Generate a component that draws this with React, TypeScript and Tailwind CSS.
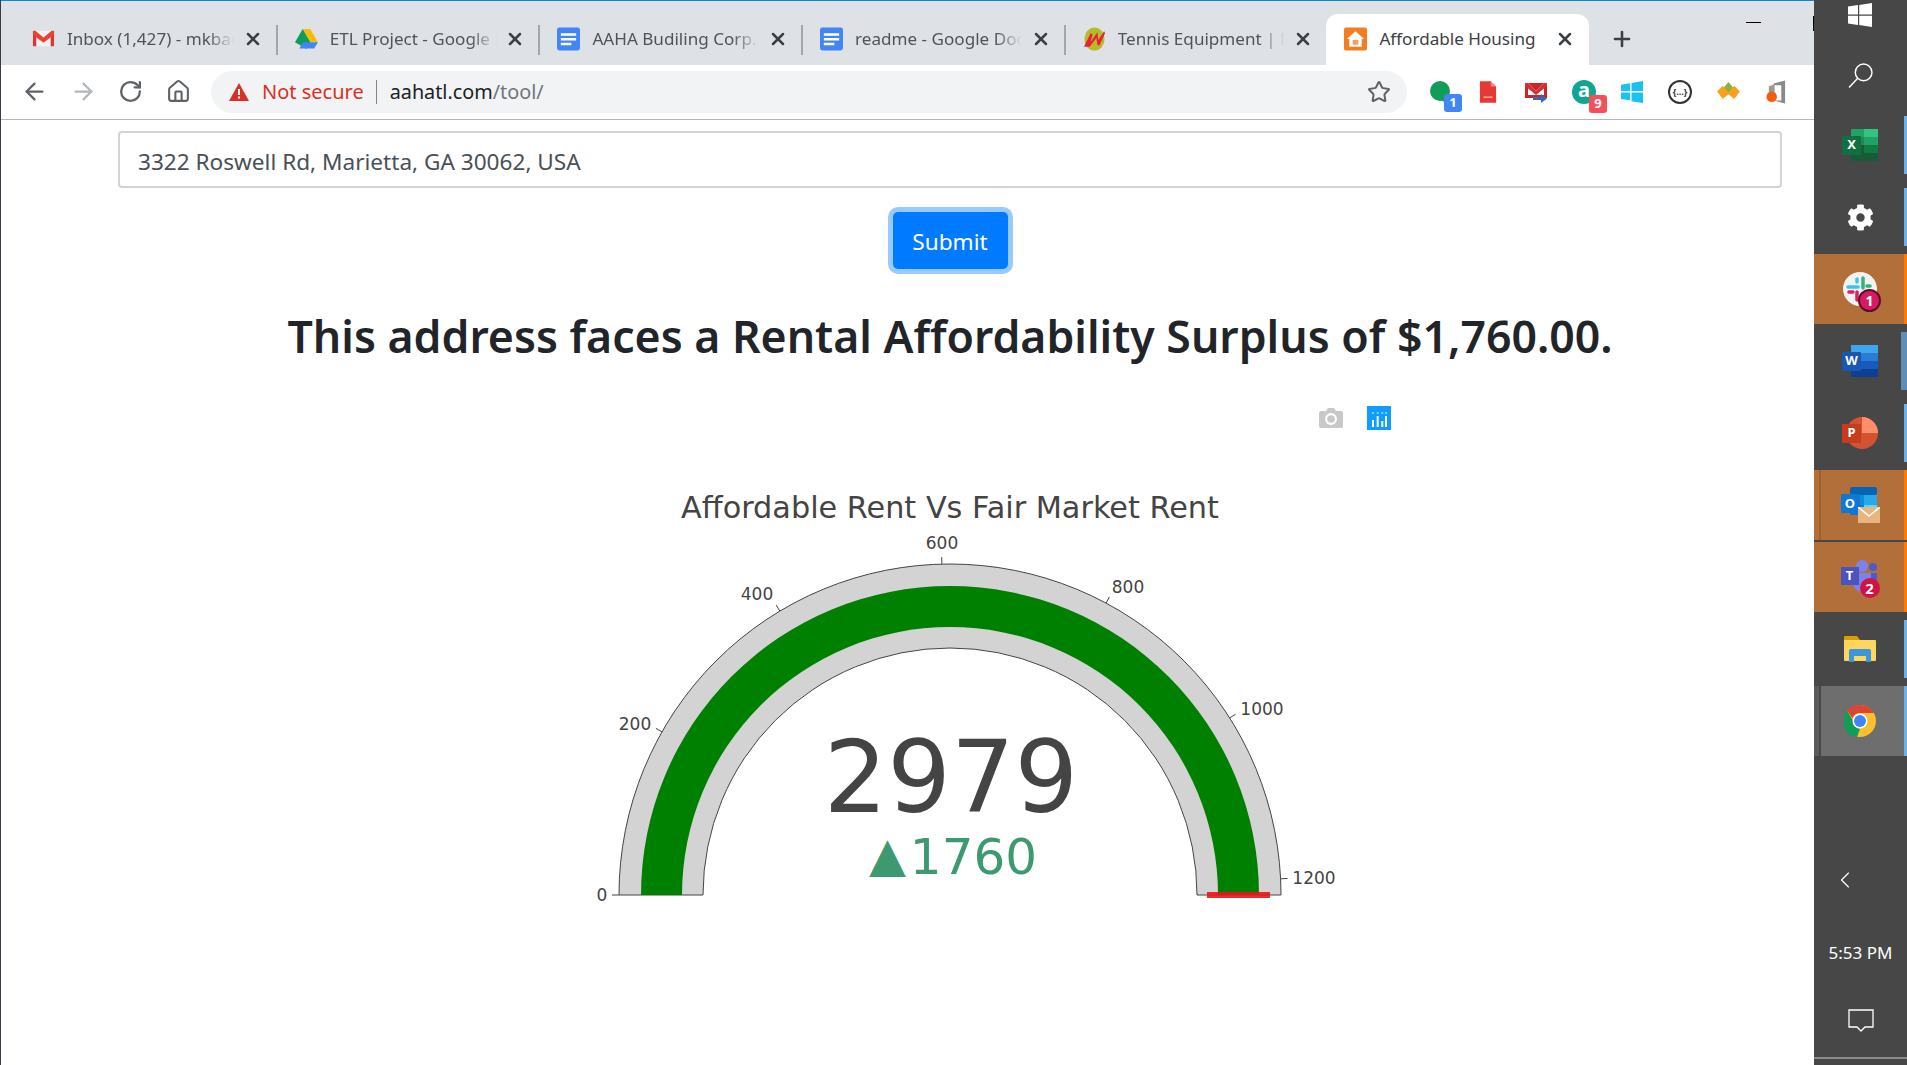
import { ArrowLeft, ArrowRight, ChevronLeft, Home, Plus, RotateCw, Star, X } from 'lucide-react';
import { FaCog } from 'react-icons/fa';
import type { ReactNode } from 'react';

const CX = 430;
const CY = 515;
const MAX = 1219;

const polar = (r: number, deg: number) => {
  const a = (Math.PI * deg) / 180;
  return [CX - r * Math.cos(a), CY - r * Math.sin(a)];
};

const sector = (outer: number, inner: number) => {
  const [ax, ay] = polar(outer, 0);
  const [bx, by] = polar(outer, 180);
  const [cx, cy] = polar(inner, 180);
  const [dx, dy] = polar(inner, 0);
  return `M${ax} ${ay}A${outer} ${outer} 0 0 1 ${bx} ${by}L${cx} ${cy}A${inner} ${inner} 0 0 0 ${dx} ${dy}Z`;
};

const ticks = [
  { v: 0, x: 82, y: 515 },
  { v: 200, x: 115, y: 344 },
  { v: 400, x: 237, y: 214 },
  { v: 600, x: 422, y: 163 },
  { v: 800, x: 608, y: 207 },
  { v: 1000, x: 742, y: 329 },
  { v: 1200, x: 794, y: 498 },
];

const GmailIcon = () => (
  <svg viewBox="0 0 24 24" className="w-[23px] h-[23px]">
    <path d="M1 4h22v16H1z" fill="#f2f2f2" />
    <path d="M1 5h3.500v15H1zM19.500 5H23v15h-3.500z" fill="#d93a30" />
    <path d="M1 4h2.500L12 11l8.500-7H23v4l-11 8.500L1 8z" fill="#ea4335" />
  </svg>
);

const DriveIcon = () => (
  <svg viewBox="0 0 24 24" className="w-[23px] h-[23px]">
    <path d="M8 2h8l8 14h-8z" fill="#fbbc04" />
    <path d="M8 2l8 14-4 7L0 16z" fill="#0f9d58" />
    <path d="M4.500 22.500L8.500 16H24l-4 6.500z" fill="#4285f4" />
  </svg>
);

const DocsIcon = () => (
  <svg viewBox="0 0 24 24" className="w-[24px] h-[24px]">
    <rect x="0" y="0" width="24" height="24" rx="2.500" fill="#4285f4" />
    <path d="M4 6h16v2.500H4zM4 11h16v2.500H4zM4 16h11v2.500H4z" fill="#fff" />
  </svg>
);

const TennisIcon = () => (
  <svg viewBox="0 0 24 24" className="w-[23px] h-[24px]">
    <ellipse cx="12" cy="12" rx="10.500" ry="12" fill="#b5bc2a" />
    <path d="M1 20L8 6l2 1-2 8 7-10 1 8 6-9 1 2-6 13-2-1-1-7-7 9z" fill="#e8203a" />
  </svg>
);

const HomeIcon = () => (
  <svg viewBox="0 0 24 24" className="w-[23px] h-[24px]">
    <rect width="24" height="24" rx="2" fill="#f57c20" />
    <path d="M12 4L3 12h2.500v8h13v-8H21z" fill="#fff" />
    <path d="M9 13h6v5H9z" fill="#f5a060" />
  </svg>
);

const tabs: { title: string; icon: ReactNode; active?: boolean }[] = [
  { title: 'Inbox (1,427) - mkbaqui@gmail.com', icon: <GmailIcon /> },
  { title: 'ETL Project - Google Drive', icon: <DriveIcon /> },
  { title: 'AAHA Budiling Corp. - Google', icon: <DocsIcon /> },
  { title: 'readme - Google Docs', icon: <DocsIcon /> },
  { title: 'Tennis Equipment | Midwest', icon: <TennisIcon /> },
  { title: 'Affordable Housing', icon: <HomeIcon />, active: true },
];

const Tab = ({ title, icon, active, last }: { title: string; icon: ReactNode; active?: boolean; last?: boolean }) => (
  <div
    className={`relative h-[51px] flex items-center pl-[18px] pr-[14px] pb-[2px] w-[262.7px] shrink-0 ${
      active ? 'bg-white rounded-t-[12px] ml-[-1px]' : ''
    }`}
  >
    <div className="w-[23px] flex justify-center shrink-0">{icon}</div>
    <div
      className={`ml-[12px] w-[167px] whitespace-nowrap overflow-hidden text-[17.1px] leading-[24px] ${
        active ? 'text-[#3c4043]' : 'text-[#50545a] [mask-image:linear-gradient(to_right,black_84%,transparent)]'
      }`}
    >
      {title}
    </div>
    <X className="ml-auto w-[20px] h-[20px] text-[#3c4043]" strokeWidth={3} />
    {!last && !active && <div className="absolute right-[-1px] top-[11px] h-[30px] w-[2px] bg-[#a3a6ab]" />}
  </div>
);

const Badge = ({ text, color }: { text: string; color: string }) => (
  <div
    className="absolute right-[-11px] bottom-[-9px] w-[18px] h-[18px] rounded-[3px] flex items-center justify-center text-white text-[13px] font-bold leading-none"
    style={{ backgroundColor: color }}
  >
    {text}
  </div>
);

const extensions: ReactNode[] = [
  <div className="relative w-[22px] h-[22px]" key="chat">
    <svg viewBox="0 0 22 22" className="w-[22px] h-[22px]">
      <circle cx="11" cy="10" r="10" fill="#0f9d58" />
      <path d="M10 18h7v4z" fill="#0f9d58" />
    </svg>
    <Badge text="1" color="#4285f4" />
  </div>,
  <svg viewBox="0 0 20 24" className="w-[18px] h-[24px]" key="pdf">
    <path d="M1 0h12l6 6v18H1z" fill="#e53935" />
    <path d="M13 0l6 6h-6z" fill="#f28b82" />
    <path d="M5 17h10v1.500H5z" fill="#f7b5b0" />
  </svg>,
  <svg viewBox="0 0 24 24" className="w-[24px] h-[24px]" key="mailfwd">
    <path d="M1 3h22v15H1z" fill="#c8252b" />
    <path d="M4 3l8 8 8-8v12H4z" fill="#fff" />
    <path d="M4 3l8 8 8-8h3v3l-11 9L1 6V3z" fill="#d8302e" />
    <path d="M9 17h8v-3l6 4.500-6 4.500v-3H9z" fill="#3768b8" />
  </svg>,
  <div
    className="relative w-[24px] h-[24px] rounded-full bg-[#12a594] flex items-center justify-center text-white text-[20px] font-bold leading-none pb-[3px]"
    key="grammar"
  >
    a
    <Badge text="9" color="#f4505a" />
  </div>,
  <svg viewBox="0 0 24 24" className="w-[22px] h-[22px]" key="windows">
    <path d="M0 4l10-1.500V11H0zM11.500 2.300L24 0v11H11.500zM0 12.500h10V21L0 19.500zM11.500 12.500H24V24l-12.500-2z" fill="#19c2f0" />
  </svg>,
  <div
    className="w-[24px] h-[24px] rounded-full border-2 border-[#333] flex items-center justify-center text-[9px] font-bold text-[#333] leading-none"
    key="json"
  >
    {'{...}'}
  </div>,
  <svg viewBox="0 0 24 20" className="w-[23px] h-[19px]" key="diamond">
    <path d="M12 0l6 7-6 6-6-6z" fill="#8bb33a" />
    <path d="M6 4l6 7 6-7 6 6-6 8-6-5-6 5-6-8z" fill="#f9a11b" />
  </svg>,
  <svg viewBox="0 0 22 24" className="w-[21px] h-[24px]" key="office">
    <path d="M8 3l12-3v24l-12-3h8V5H8z" fill="#8a8a8a" />
    <path d="M3 6l6-2v9H3z" fill="#9a9a9a" />
    <circle cx="6" cy="17" r="5.500" fill="#f75c0a" />
  </svg>,
];

const Square = ({ letter, bg }: { letter: string; bg: string }) => (
  <div
    className="absolute left-0 top-[7px] w-[19px] h-[19px] flex items-center justify-center text-white text-[13px] font-bold rounded-[1px]"
    style={{ backgroundColor: bg }}
  >
    {letter}
  </div>
);

const ExcelIcon = () => (
  <div className="relative w-[36px] h-[33px]">
    <svg viewBox="0 0 27 32" className="absolute right-0 top-0 w-[27px] h-[32px]">
      <path d="M1 0h25a1 1 0 0 1 1 1v7H0V1a1 1 0 0 1 1-1z" fill="#22a366" />
      <rect x="13" width="14" height="8" fill="#33c481" />
      <rect y="8" width="27" height="8" fill="#1f8a58" />
      <rect x="13" y="8" width="14" height="8" fill="#21a366" />
      <rect y="16" width="27" height="8" fill="#185c37" />
      <rect x="13" y="16" width="14" height="8" fill="#107c41" />
      <rect y="24" width="27" height="8" fill="#185c37" />
    </svg>
    <Square letter="X" bg="#107040" />
  </div>
);

const WordIcon = () => (
  <div className="relative w-[36px] h-[33px]">
    <svg viewBox="0 0 27 32" className="absolute right-0 top-0 w-[27px] h-[32px]">
      <rect width="27" height="8" fill="#41a5ee" />
      <rect y="8" width="27" height="8" fill="#2b7cd3" />
      <rect y="16" width="27" height="8" fill="#185abd" />
      <rect y="24" width="27" height="8" fill="#103f91" />
    </svg>
    <Square letter="W" bg="#1a56b5" />
  </div>
);

const PowerPointIcon = () => (
  <div className="relative w-[36px] h-[33px]">
    <svg viewBox="0 0 32 32" className="absolute right-0 top-0 w-[32px] h-[32px]">
      <circle cx="16" cy="16" r="16" fill="#d35230" />
      <path d="M16 0a16 16 0 0 1 16 16H16z" fill="#ff8f6b" />
    </svg>
    <Square letter="P" bg="#c43e1c" />
  </div>
);

const OutlookIcon = () => (
  <div className="relative w-[39px] h-[36px]">
    <svg viewBox="0 0 27 28" className="absolute right-[3px] top-0 w-[27px] h-[28px]">
      <rect width="27" height="8" x="0" y="0" rx="2" fill="#0364b8" />
      <rect y="8" width="14" height="10" fill="#0a8fd9" />
      <rect x="14" y="8" width="13" height="10" fill="#28a8ea" />
      <rect y="18" width="14" height="10" fill="#0f78d4" />
      <rect x="14" y="18" width="13" height="10" fill="#50d9ff" />
    </svg>
    <Square letter="O" bg="#0f78d4" />
    <svg viewBox="0 0 22 16" className="absolute right-0 bottom-0 w-[22px] h-[16px]">
      <rect width="22" height="16" fill="#e9b57e" />
      <path d="M0 0l11 9 11-9" fill="none" stroke="#fff" strokeWidth="1.500" />
    </svg>
  </div>
);

const SlackIcon = () => (
  <div className="relative w-[34px] h-[34px] rounded-full bg-[#f4f3ef]">
    <svg viewBox="0 0 34 34" className="absolute inset-0">
      <path d="M5 15h10" stroke="#36c5f0" strokeWidth="3.500" strokeLinecap="round" />
      <path d="M14 7v3" stroke="#36c5f0" strokeWidth="3.500" strokeLinecap="round" />
      <path d="M20 6v10" stroke="#2eb67d" strokeWidth="3.500" strokeLinecap="round" />
      <path d="M6 20h4" stroke="#e01e5a" strokeWidth="3.500" strokeLinecap="round" />
      <path d="M14 20v8" stroke="#e01e5a" strokeWidth="3.500" strokeLinecap="round" />
      <path d="M24 14h3" stroke="#2eb67d" strokeWidth="3.500" strokeLinecap="round" />
    </svg>
    <div className="absolute right-[-4px] bottom-[-6px] w-[23px] h-[23px] rounded-full bg-[#d81b60] border-2 border-[#5a0f2e] flex items-center justify-center text-white text-[14px] font-bold leading-none">
      1
    </div>
  </div>
);

const TeamsIcon = () => (
  <div className="relative w-[39px] h-[34px]">
    <svg viewBox="0 0 30 32" className="absolute right-[3px] top-0 w-[30px] h-[32px]">
      <circle cx="15" cy="6" r="6" fill="#7b83eb" />
      <circle cx="26" cy="7" r="4" fill="#5059c9" />
      <path d="M20 13h10v9a6 6 0 0 1-10 4z" fill="#5059c9" />
      <path d="M6 13h18v10a9 9 0 0 1-18 0z" fill="#7b83eb" />
    </svg>
    <div className="absolute left-0 top-[7px] w-[18px] h-[18px] bg-[#4b53bc] flex items-center justify-center text-white text-[13px] font-bold">
      T
    </div>
    <div className="absolute right-0 bottom-[-4px] w-[20px] h-[20px] rounded-full bg-[#d31145] flex items-center justify-center text-white text-[15px] font-bold leading-none">
      2
    </div>
  </div>
);

const ExplorerIcon = () => (
  <svg viewBox="0 0 32 26" className="w-[32px] h-[26px]">
    <path d="M0 1a1 1 0 0 1 1-1h12l3 4H0z" fill="#d79f00" />
    <path d="M0 4h31a1 1 0 0 1 1 1v19a1 1 0 0 1-1 1H1a1 1 0 0 1-1-1z" fill="#ffd65c" />
    <path d="M5 26V15a2 2 0 0 1 2-2h18a2 2 0 0 1 2 2v11h-5v-6H10v6z" fill="#3a96dd" />
  </svg>
);

const ChromeIcon = () => (
  <svg viewBox="0 0 32 32" className="w-[32px] h-[32px]">
    <circle cx="16" cy="16" r="16" fill="#fbc02d" />
    <path d="M16 0a16 16 0 0 1 13.900 8H16a8 8 0 0 0-7.500 5.200L3 5.500A16 16 0 0 1 16 0z" fill="#db4437" />
    <path d="M3 5.500l6.500 11A8 8 0 0 0 16 24l-3 8A16 16 0 0 1 3 5.500z" fill="#0f9d58" />
    <circle cx="16" cy="16" r="7.500" fill="#fff" />
    <circle cx="16" cy="16" r="6" fill="#4285f4" />
  </svg>
);

const rows: { icon: ReactNode; state: 'open' | 'alert' | 'flash' | 'focus' | 'word' }[] = [
  { icon: <ExcelIcon />, state: 'open' },
  { icon: <FaCog className="w-[27px] h-[27px] text-white" />, state: 'open' },
  { icon: <SlackIcon />, state: 'alert' },
  { icon: <WordIcon />, state: 'word' },
  { icon: <PowerPointIcon />, state: 'open' },
  { icon: <OutlookIcon />, state: 'flash' },
  { icon: <TeamsIcon />, state: 'alert' },
  { icon: <ExplorerIcon />, state: 'open' },
  { icon: <ChromeIcon />, state: 'focus' },
];

const TaskRow = ({ icon, state }: { icon: ReactNode; state: string }) => (
  <div
    className={`relative h-[70px] flex items-center justify-center pr-[1px] ${
      state === 'alert' || state === 'flash' ? 'bg-[#b36f3a]' : ''
    }`}
  >
    {state === 'focus' && (
      <>
        <div className="absolute left-0 top-0 bottom-0 w-[5px] bg-[#5a5a5a]" />
        <div className="absolute left-[7px] right-0 top-0 bottom-0 bg-[#6e6e6e]" />
      </>
    )}
    {state === 'flash' && <div className="absolute left-[5px] top-0 bottom-0 w-[2px] bg-[#a05f2c]" />}
    <div className="relative">{icon}</div>
    {(state === 'alert' || state === 'flash') && <div className="absolute right-0 top-0 bottom-0 w-[3px] bg-[#ff7a00]" />}
    {state === 'open' && <div className="absolute right-0 top-[6px] bottom-[6px] w-[3px] bg-[#6fb1e6]" />}
    {state === 'word' && <div className="absolute right-0 top-[6px] bottom-[6px] w-[6px] bg-[#5f8fb8]" />}
    {state === 'focus' && <div className="absolute right-0 top-0 bottom-0 w-[3px] bg-[#6fb1e6]" />}
  </div>
);

const Taskbar = () => (
  <div className="w-[93px] shrink-0 h-full bg-[#474747] flex flex-col font-['Noto_Sans',sans-serif]">
    <div className="h-[30px] flex items-center justify-center pr-[1px]">
      <svg viewBox="0 0 24 24" className="w-[24px] h-[24px]">
        <path d="M0 3.500l10-1.400V11.500H0zM11.200 2L24 0v11.500H11.200zM0 12.700h10V22L0 20.600zM11.200 12.700H24V24l-12.800-2z" fill="#fff" />
      </svg>
    </div>
    <div className="mt-[29px] h-[32px] flex items-center justify-center">
      <svg viewBox="0 0 24 24" className="w-[25px] h-[25px]" fill="none" stroke="#fff" strokeWidth="1.400">
        <circle cx="15" cy="9" r="8" />
        <path d="M9.300 14.700L1 23.500" />
      </svg>
    </div>
    <div className="mt-[19px] flex flex-col gap-[2px]">
      {rows.map((r, i) => (
        <TaskRow key={i} icon={r.icon} state={r.state} />
      ))}
    </div>
    <div className="mt-[108px] pl-[17px] h-[32px] flex items-center">
      <ChevronLeft className="w-[28px] h-[28px] text-white" strokeWidth={1} />
    </div>
    <div className="mt-[45px] text-center text-white text-[17px] leading-[24px]">5:53 PM</div>
    <div className="mt-[44px] flex justify-center">
      <svg viewBox="0 0 26 24" className="w-[26px] h-[24px]">
        <path d="M1 1h24v17H17l-4 4-4-4H1z" fill="none" stroke="#fff" strokeWidth="1.300" />
      </svg>
    </div>
    <div className="mt-[24px] h-[2px] bg-[#8a8a8a]" />
  </div>
);

const TabStrip = () => (
  <div className="h-[65px] bg-[#dee1e6] border-t border-[#0f86d8] pt-[13px] flex pl-[13px] relative shrink-0">
    {tabs.map((t, i) => (
      <Tab key={t.title} title={t.title} icon={t.icon} active={t.active} last={i === 4} />
    ))}
    <div className="h-[51px] pb-[2px] flex items-center ml-[21px]">
      <Plus className="w-[24px] h-[24px] text-[#3c4043]" strokeWidth={2.6} />
    </div>
    <div className="absolute left-[1745px] top-[21px] w-[15px] h-[1px] bg-black" />
    <div className="absolute right-0 top-[15px] w-[1px] h-[15px] bg-black" />
  </div>
);

const Toolbar = () => (
  <div className="h-[55px] bg-white border-b border-[#b5b5b5] flex items-center shrink-0 pl-[20px] pb-[1px]">
    <ArrowLeft className="w-[27px] h-[27px] text-[#5f6368]" strokeWidth={2} />
    <ArrowRight className="ml-[22px] w-[27px] h-[27px] text-[#b3b6ba]" strokeWidth={2} />
    <RotateCw className="ml-[21px] w-[25px] h-[25px] text-[#5f6368]" strokeWidth={2.2} />
    <Home className="ml-[23px] w-[25px] h-[25px] text-[#5f6368]" strokeWidth={2} />
    <div className="ml-[20px] w-[1196px] h-[42px] rounded-full bg-[#f1f3f4] flex items-center pl-[18px] pr-[16px]">
      <svg viewBox="0 0 20 18" className="w-[20px] h-[18px]">
        <path d="M10 0l10 18H0z" fill="#d93025" />
        <path d="M9 6h2v6H9zM9 13.500h2v2H9z" fill="#fff" />
      </svg>
      <span className="ml-[13px] pt-[1px] text-[#d93025] text-[20px] leading-none">Not secure</span>
      <div className="ml-[12px] w-[1px] h-[24px] bg-[#80868b]" />
      <span className="ml-[13px] pt-[1px] text-[19.8px] leading-none text-[#202124]">
        aahatl.com<span className="text-[#70757a]">/tool/</span>
      </span>
      <Star className="ml-auto w-[24px] h-[24px] text-[#5f6368]" strokeWidth={2} />
    </div>
    <div className="ml-[9px] flex items-center">
      {extensions.map((e, i) => (
        <div key={i} className="w-[48px] flex justify-center">
          {e}
        </div>
      ))}
    </div>
  </div>
);

const Gauge = () => (
  <div className="relative w-[860px] h-[540px] mt-[15px] shrink-0">
    <svg viewBox="0 0 860 540" className="w-[860px] h-[540px]" style={{ fontFamily: '"DejaVu Sans", sans-serif' }}>
      <text x="430" y="138" textAnchor="middle" fontSize="30.300" fill="#444">
        Affordable Rent Vs Fair Market Rent
      </text>
      <path d={sector(331, 247)} fill="#d3d3d3" stroke="#444" strokeWidth="1" />
      <path d={sector(309, 268)} fill="#008000" />
      {ticks.map((t) => {
        const deg = (180 * t.v) / MAX;
        const [x1, y1] = polar(331, deg);
        const [x2, y2] = polar(338, deg);
        return (
          <g key={t.v}>
            <line x1={x1} y1={y1} x2={x2} y2={y2} stroke="#444" strokeWidth="1" />
            <text x={t.x} y={t.y + 6} textAnchor="middle" fontSize="17" fill="#444">
              {t.v}
            </text>
          </g>
        );
      })}
      <line x1="687" y1="515" x2="750" y2="515" stroke="#e8141c" strokeWidth="6" strokeOpacity="0.9" />
      <text x="431" y="432" textAnchor="middle" fontSize="100" fill="#444">
        2979
      </text>
      <text x="433" y="494" textAnchor="middle" fontSize="50" fill="#3d9970">
        <tspan fontSize="48" dy="-3">▲</tspan>
        <tspan dx="4" dy="3">1760</tspan>
      </text>
    </svg>
    <div className="absolute left-[799px] top-[28px]">
      <svg viewBox="0 0 24 20" className="w-[24px] h-[20px]">
        <path d="M2 3h5l2-3h6l2 3h5a2 2 0 0 1 2 2v13a2 2 0 0 1-2 2H2a2 2 0 0 1-2-2V5a2 2 0 0 1 2-2z" fill="#c8c8c8" />
        <circle cx="12" cy="11" r="6" fill="#fff" />
        <circle cx="12" cy="11" r="3.800" fill="#c8c8c8" />
      </svg>
    </div>
    <div className="absolute left-[847px] top-[26px]">
      <svg viewBox="0 0 24 24" className="w-[24px] h-[24px]">
        <rect width="24" height="24" fill="#119dff" />
        <path d="M5 6h2v2H5zM9.700 6h2v2h-2zM14.300 6h2v2h-2zM18 6h2v2h-2z" fill="#69d2ff" />
        <path d="M5 14h2v7H5zM9.700 10h2v11h-2zM14.300 15h2v6h-2zM18 10h2v11h-2z" fill="#fff" />
      </svg>
    </div>
  </div>
);

export default function App() {
  return (
    <div className="w-[1907px] h-[1065px] flex overflow-hidden bg-white font-['Noto_Sans',sans-serif]">
      <div className="w-[1814px] h-full flex flex-col border-l border-[#3a3a4a] overflow-hidden">
        <TabStrip />
        <Toolbar />
        <div className="flex-1 flex flex-col items-center pl-[117px] pr-[32px] pt-[11px]">
          <input
            readOnly
            value="3322 Roswell Rd, Marietta, GA 30062, USA"
            className="w-full h-[57px] shrink-0 border-2 border-[#ced4da] rounded-[4px] px-[18px] pt-[3px] text-[22.6px] text-[#495057] outline-none"
          />
          <button className="mt-[24px] w-[115px] h-[57px] shrink-0 rounded-[5px] bg-[#007bff] text-white text-[22.6px] pt-[3px] ring-[5px] ring-[#99caff]">
            Submit
          </button>
          <h1 className="mt-[38px] h-[58px] shrink-0 text-[44.6px] leading-[58px] font-semibold text-[#212529] whitespace-nowrap">
            This address faces a Rental Affordability Surplus of $1,760.00.
          </h1>
          <Gauge />
        </div>
      </div>
      <Taskbar />
    </div>
  );
}
